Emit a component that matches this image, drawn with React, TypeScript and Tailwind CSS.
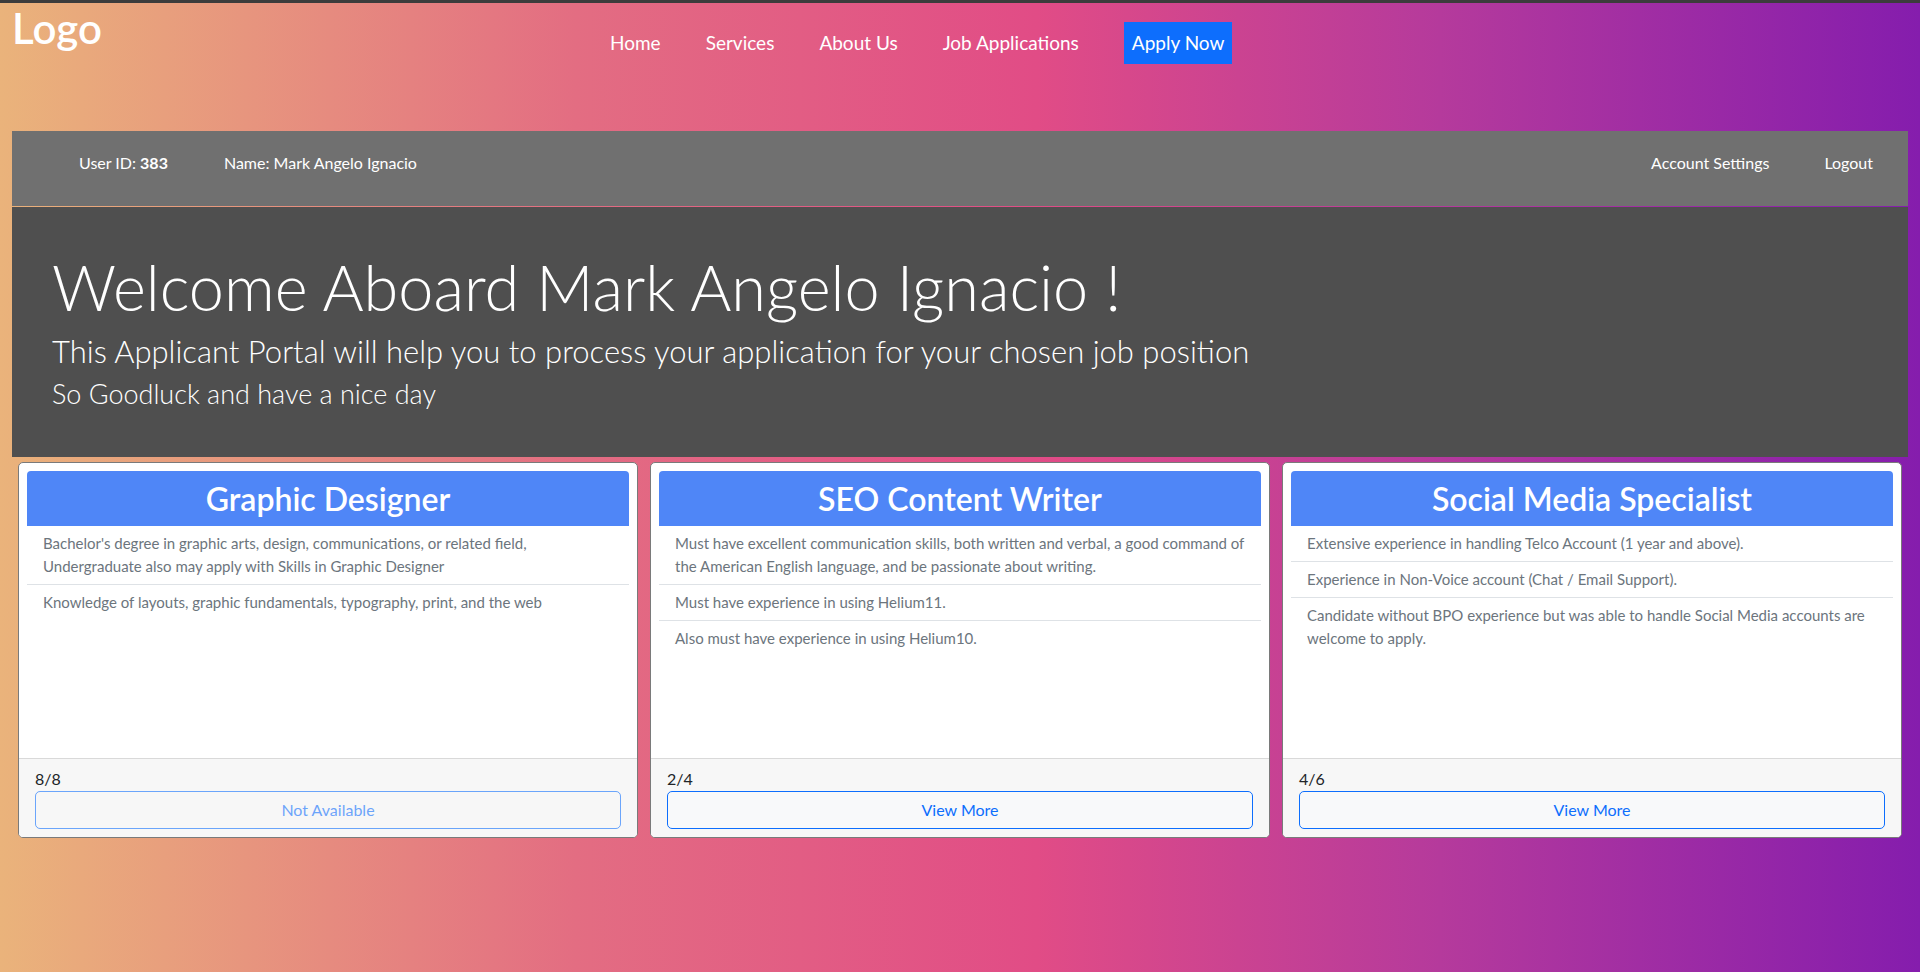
import React from "react";

type Job = {
  title: string;
  items: string[];
  count: string;
  available: boolean;
};

const jobs: Job[] = [
  {
    title: "Graphic Designer",
    items: [
      "Bachelor's degree in graphic arts, design, communications, or related field, Undergraduate also may apply with Skills in Graphic Designer",
      "Knowledge of layouts, graphic fundamentals, typography, print, and the web",
    ],
    count: "8/8",
    available: false,
  },
  {
    title: "SEO Content Writer",
    items: [
      "Must have excellent communication skills, both written and verbal, a good command of the American English language, and be passionate about writing.",
      "Must have experience in using Helium11.",
      "Also must have experience in using Helium10.",
    ],
    count: "2/4",
    available: true,
  },
  {
    title: "Social Media Specialist",
    items: [
      "Extensive experience in handling Telco Account (1 year and above).",
      "Experience in Non-Voice account (Chat / Email Support).",
      "Candidate without BPO experience but was able to handle Social Media accounts are welcome to apply.",
    ],
    count: "4/6",
    available: true,
  },
];

function JobCard({ job }: { job: Job }) {
  return (
    <div className="flex h-[376px] flex-col overflow-hidden rounded-[5px] border border-[#7a7a7a] bg-white">
      <div className="flex-1 p-2">
        <div className="flex h-[55px] items-center justify-center rounded-t-[4px] bg-[#4f86f7]">
          <h2 className="text-[32px] font-semibold leading-none text-white">{job.title}</h2>
        </div>
        <ul>
          {job.items.map((it, i) => (
            <li
              key={i}
              className={
                "px-4 py-[6px] text-[15px] leading-[23px] text-[#6c757d] " +
                (i < job.items.length - 1 ? "border-b border-[#dee2e6]" : "")
              }
            >
              {it}
            </li>
          ))}
        </ul>
      </div>
      <div className="border-t border-[#d9d9d9] bg-[#f7f7f7] px-4 py-2">
        <div className="text-[16px] leading-6 text-[#212529]">{job.count}</div>
        {job.available ? (
          <button className="h-[38px] w-full rounded-[5px] border border-[#0d6efd] bg-[#f8f9fa] text-[16px] text-[#0d6efd]">
            View More
          </button>
        ) : (
          <button
            disabled
            className="h-[38px] w-full rounded-[5px] border border-[#0d6efd] bg-transparent text-[16px] text-[#0d6efd] opacity-60"
          >
            Not Available
          </button>
        )}
      </div>
    </div>
  );
}

export default function App() {
  return (
    <div
      className="min-h-[972px] border-t-[3px] border-[#3c3c3c] bg-[linear-gradient(90deg,#eab37b_0%,#e36d82_30%,#e14c86_54%,#b53a9c_75%,#851dad_100%)]"
      style={{ fontFamily: "Lato, 'Noto Sans', sans-serif" }}
    >
      {/* Top header */}
      <header className="flex h-[128px] items-start">
        <div className="w-[610px] pl-[12px]">
          <h1 className="text-[42px] font-semibold leading-[50px] text-white">Logo</h1>
        </div>
        <nav className="mt-[19px] flex h-[42px] items-center gap-[45px] text-[19px] text-white">
          <a className="leading-[30px]">Home</a>
          <a className="leading-[30px]">Services</a>
          <a className="leading-[30px]">About Us</a>
          <a className="leading-[30px]">Job Applications</a>
          <a className="flex h-[42px] items-center bg-[#0d6efd] px-2 leading-[30px]">Apply Now</a>
        </nav>
      </header>

      {/* User bar */}
      <div className="mx-[12px] flex h-[75px] items-center bg-[#707070] pb-3 pl-[67px] pr-[35px] text-[16px] leading-[22px] text-white">
        <div className="flex gap-[56px]">
          <span>
            User ID: <b className="font-bold">383</b>
          </span>
          <span>Name: Mark Angelo Ignacio</span>
        </div>
        <div className="ml-auto flex gap-[55px]">
          <a>Account Settings</a>
          <a>Logout</a>
        </div>
      </div>

      {/* Welcome */}
      <section className="mx-[12px] mt-px h-[250px] bg-[#4f4f4f] pl-[40px] pt-[41px] text-white">
        <h1 className="text-[63px] font-light leading-[77px]">Welcome Aboard Mark Angelo Ignacio !</h1>
        <p className="mt-[4px] text-[31px] font-light leading-[45px]">
          This Applicant Portal will help you to process your application for your chosen job position
        </p>
        <p className="mt-[2px] text-[27px] font-light leading-[36px]">So Goodluck and have a nice day</p>
      </section>

      {/* Cards */}
      <div className="mt-[5px] grid grid-cols-3 gap-[12px] px-[18px]">
        {jobs.map((j) => (
          <JobCard key={j.title} job={j} />
        ))}
      </div>
    </div>
  );
}
